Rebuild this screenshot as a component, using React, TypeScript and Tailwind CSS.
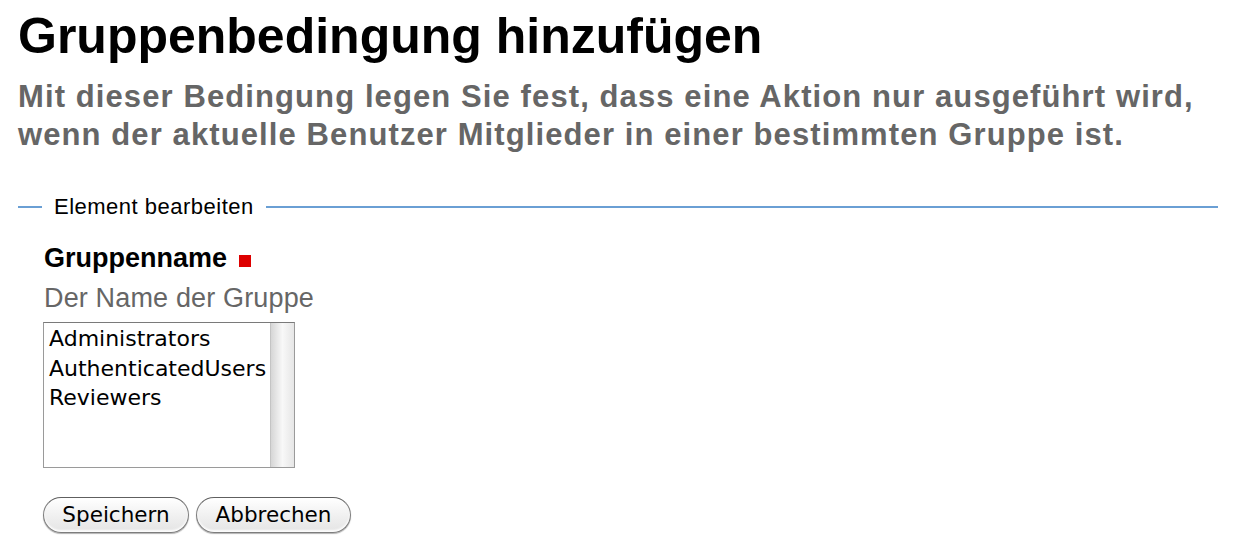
export default function App() {
  const btn =
    "h-[36px] rounded-full border border-[#7d7d7d] border-t-[#5f5f5f] bg-gradient-to-b from-white via-[#f1f1f1] to-[#e4e4e4] text-[21.5px] leading-[34px] text-black shadow-[0_1px_1px_rgba(0,0,0,0.3),inset_0_-2px_2px_rgba(255,255,255,0.9)]";
  return (
    <div
      className="bg-white w-[1244px] h-[553px] overflow-hidden pl-[18px] pr-[26px]"
      style={{ fontFamily: '"Liberation Sans", Arial, Helvetica, sans-serif' }}
    >
      <h1 className="text-[50px] leading-[56px] font-bold text-black pt-[8px]">Gruppenbedingung hinzufügen</h1>
      <p className="text-[31px] leading-[38px] font-bold text-[#666666] mt-[14px] tracking-[1.1px]">
        Mit dieser Bedingung legen Sie fest, dass eine Aktion nur ausgeführt wird,
        <br />
        wenn der aktuelle Benutzer Mitglieder in einer bestimmten Gruppe ist.
      </p>
      <div className="flex items-center mt-[41px] h-[24px]">
        <div className="w-[24px] h-[2px] bg-[#6a9fd4]" />
        <span className="px-[12px] text-[22px] leading-[24px] tracking-[0.5px] text-black">Element bearbeiten</span>
        <div className="flex-1 h-[2px] bg-[#6a9fd4]" />
      </div>
      <div className="pl-[26px]">
        <div className="flex items-baseline mt-[23px] h-[32px]">
          <span className="text-[27px] leading-[32px] font-bold text-black">Gruppenname</span>
          <span className="ml-[12px] w-[12px] h-[12px] bg-[#dd0000]" />
        </div>
        <div className="text-[27px] text-[#666666] mt-[8px] leading-[32px] tracking-[0.15px]">Der Name der Gruppe</div>
        <div
          className="mt-[8px] ml-[-1px] w-[252px] h-[146px] border border-[#9a9a9a] border-t-[#7a7a7a] flex"
          style={{ fontFamily: '"DejaVu Sans", Verdana, sans-serif' }}
        >
          <div className="flex-1 pl-[5px] pt-[1px] text-[22px] leading-[29.5px] text-black">
            <div>Administrators</div>
            <div>AuthenticatedUsers</div>
            <div>Reviewers</div>
          </div>
          <div className="w-[24px] border-l border-[#c4c4c4] bg-gradient-to-r from-[#d6d6d6] via-[#f8f8f8] to-[#e6e6e6]" />
        </div>
        <div className="flex gap-[7px] mt-[29px] ml-[-1px]" style={{ fontFamily: '"DejaVu Sans", Verdana, sans-serif' }}>
          <button className={btn + " w-[146px]"}>Speichern</button>
          <button className={btn + " w-[155px]"}>Abbrechen</button>
        </div>
      </div>
    </div>
  );
}
